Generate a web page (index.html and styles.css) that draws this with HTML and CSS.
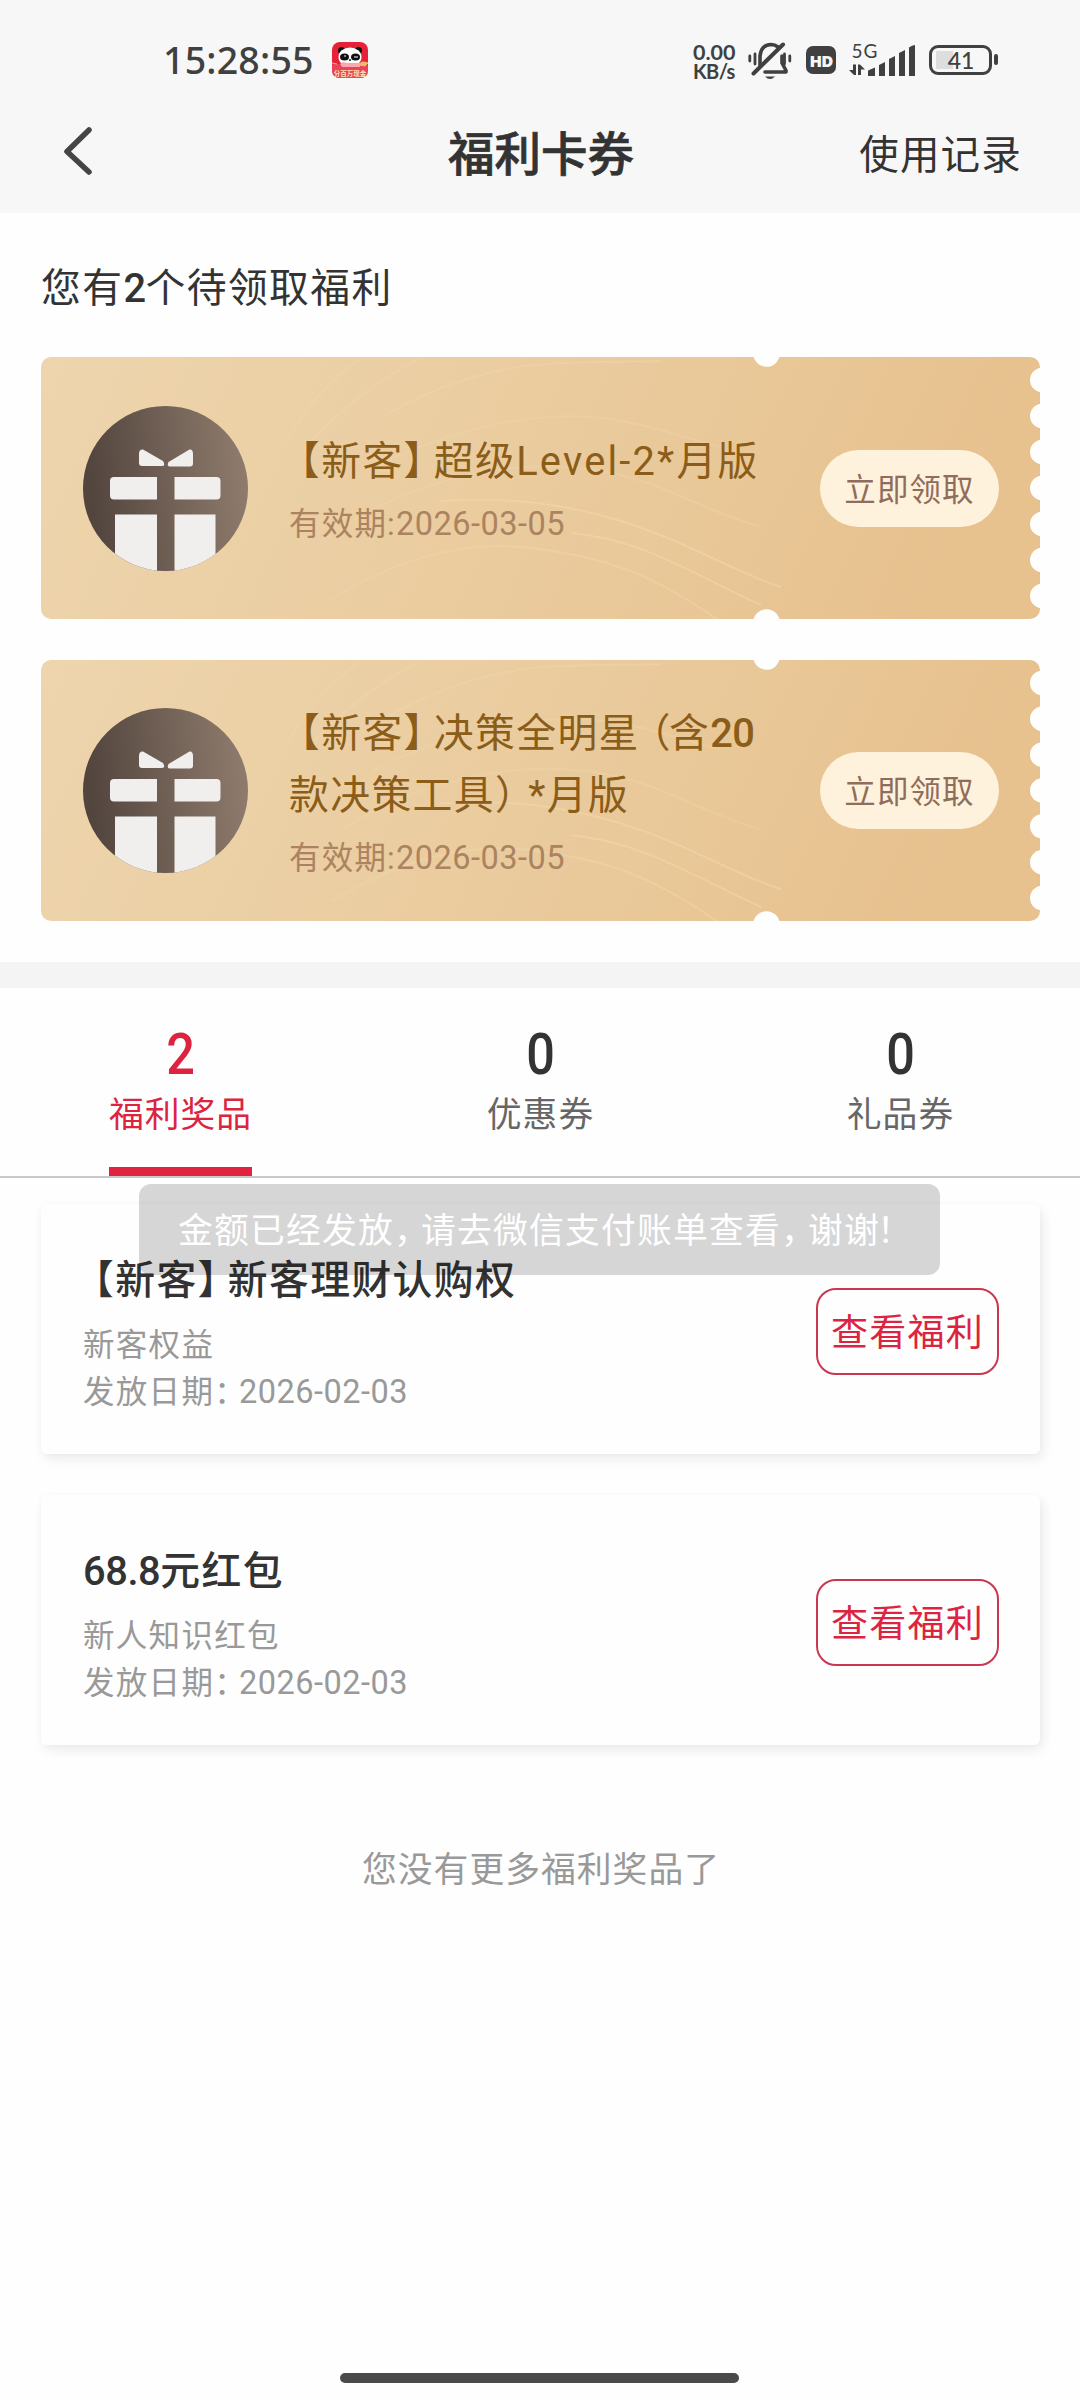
FILE: index.html
```html
<!DOCTYPE html>
<html lang="zh-CN">
<head>
<meta charset="utf-8">
<title>福利卡券</title>
<link rel="stylesheet" href="styles.css">
</head>
<body>
<svg class="defs" width="0" height="0" aria-hidden="true">
  <defs>
    <linearGradient id="coin" x1="0" y1="0.1" x2="1" y2="0"><stop offset="0" stop-color="#52453e"/><stop offset="1" stop-color="#927e6f"/></linearGradient>
    <linearGradient id="gold" x1="0" y1="0" x2="1" y2="0.12"><stop offset="0" stop-color="#eed5ae"/><stop offset="0.5" stop-color="#eacc9f"/><stop offset="1" stop-color="#e7c18e"/></linearGradient>
    <clipPath id="disc"><circle cx="82.5" cy="82.5" r="82.5"/></clipPath>
    <symbol id="gift" viewBox="0 0 165 165">
      <circle cx="82.5" cy="82.5" r="82.5" fill="url(#coin)"/>
      <g fill="#f0efee" clip-path="url(#disc)">
        <path d="M60 43.5 80 55q3 5-1 5H59q-3 0-3-3V48q0-5 4-4.500Z"/>
        <path d="M106.500 43.500 85.500 56q-2 4 1 4.500h20.500q3 0 3-3V48q0-5-3.500-4.500Z"/>
        <path d="M31 71h43v22.500H31q-4 0-4-4V75q0-4 4-4ZM91.500 71h42q4 0 4 4v14.500q0 4-4 4h-42ZM32 108.500h42V165H32ZM91.500 108.500h41V165h-41Z"/>
      </g>
    </symbol>
    <symbol id="ticket" viewBox="0 0 999 262" preserveAspectRatio="none">
      <rect width="999" height="262" rx="10" fill="url(#gold)"/>
      <g fill="none" stroke="#f3d9b0" stroke-width="2">
        <path opacity=".3" d="M248 80C264 52 286 26 318 2M262 94C292 58 332 26 378 2"/>
        <path opacity=".4" d="M344 58C400 26 460 8 520 6S590 5 620 4"/>
        <path opacity=".3" d="M330 112C420 66 500 56 550 60S640 80 680 90"/>
        <path opacity=".3" d="M300 170C400 110 490 104 550 112C620 122 660 154 720 170"/>
        <path opacity=".5" d="M400 144C470 140 520 146 580 164C650 186 690 214 740 230"/>
        <path opacity=".5" d="M530 176C600 182 650 216 720 248"/>
        <path opacity=".4" d="M290 242C360 200 430 180 505 193C580 204 620 224 676 262"/>
      </g>
      <g fill="#fefefe">
        <circle cx="725.500" cy="-3.500" r="13.300"/><circle cx="725.500" cy="265.500" r="13.300"/>
        <circle cx="1001.500" cy="23" r="12.500"/><circle cx="1001.500" cy="59" r="12.500"/><circle cx="1001.500" cy="95" r="12.500"/><circle cx="1001.500" cy="131" r="12.500"/><circle cx="1001.500" cy="167" r="12.500"/><circle cx="1001.500" cy="203" r="12.500"/><circle cx="1001.500" cy="239" r="12.500"/>
      </g>
    </symbol>
  </defs>
</svg>

<header class="header">
  <div class="status">
    <span class="clock">15:28:55</span>
    <svg class="panda" width="36" height="36" viewBox="0 0 36 36">
      <rect width="36" height="36" rx="8" fill="#e52238"/>
      <path d="M0 23q6-3 10 1h16q4-4 10-1v5q0 8-8 8H8q-8 0-8-8Z" fill="#e8455a"/>
      <path d="M0 21l5 1M27 23q2-4 5-3l4 1-3 3Z" stroke="#f6b56a" fill="#f6b56a"/>
      <circle cx="9.500" cy="8.500" r="3.500" fill="#111"/><circle cx="26.500" cy="8.500" r="3.500" fill="#111"/>
      <ellipse cx="18" cy="15" rx="11.500" ry="9.500" fill="#fff"/>
      <path d="M8 22l3-2 4 1h13v4H10Z" fill="#f8a9b0"/>
      <ellipse cx="12.500" cy="15" rx="4.500" ry="3.500" fill="#111"/><ellipse cx="23.500" cy="15" rx="4.500" ry="3.500" fill="#111"/>
      <path d="M12 14h2M22 15h4" stroke="#fff" stroke-width="1.200"/><circle cx="18" cy="18" r="1" fill="#111"/>
      <text x="18" y="33.500" text-anchor="middle" class="panda-text">分百万现金</text>
    </svg>
    <div class="rate"><span>0.00</span><span class="unit">KB/s</span></div>
    <svg class="bell" width="44" height="38" viewBox="0 0 44 38" fill="none" stroke="#404040" stroke-width="3.600" stroke-linecap="round">
      <path d="M1.800 14v5M7 12v10M36.500 12v10M41.800 14v5" stroke-width="2.800"/>
      <path d="M12 24V14Q13 3 23 2.500Q27 2.500 30 5M34 14V21L38 28.500V30H17" stroke-linejoin="round"/>
      <path d="M5.500 31.500 35 2.500" stroke-width="4"/>
      <path d="M17 34.500h10q-5 5-10 0Z" fill="#404040" stroke="none"/>
    </svg>
    <span class="hd">HD</span>
    <svg class="signal" width="68" height="36" viewBox="0 0 68 36" fill="#404040">
      <text x="2.500" y="16" class="net" textLength="26">5G</text>
      <path d="M4 22.500h3V33H5L0 28h4ZM9 33V22.500h2l5 5h-4V33Z"/>
      <path d="M19 28.500 26 25.500V34H19ZM30 23l6-3v14h-6ZM40 17l6-3v20h-6ZM50 11l6-3v26h-6ZM60 5.500q3-2.500 6-2.500v31h-6Z"/>
    </svg>
    <div class="battery"><span>41</span></div>
  </div>
  <div class="nav">
    <svg class="back" width="32" height="56" viewBox="0 0 32 56" fill="none" stroke="#454545" stroke-width="5.500" stroke-linecap="round" stroke-linejoin="round"><path d="M27 7 5 28.500 27 49"/></svg>
    <h1>福利卡券</h1>
    <a class="history">使用记录</a>
  </div>
</header>

<section class="pending">
  <h2>您有<span class="digit">2</span>个待领取福利</h2>
  <article class="ticket">
    <svg class="ticket-bg"><use href="#ticket"/></svg>
    <svg class="gift"><use href="#gift"/></svg>
    <div class="ticket-info">
      <p class="ticket-title"><span class="open">【</span>新客<span class="close">】</span>超级<span class="latin">Level-2*</span>月版</p>
      <p class="ticket-date">有效期:<span class="date">2026-03-05</span></p>
    </div>
    <button class="claim">立即领取</button>
  </article>
  <article class="ticket">
    <svg class="ticket-bg"><use href="#ticket"/></svg>
    <svg class="gift"><use href="#gift"/></svg>
    <div class="ticket-info">
      <p class="ticket-title"><span class="open">【</span>新客<span class="close">】</span>决策全明星<span class="paren-open">（</span>含<span class="digit">20</span><br>款决策工具<span class="paren-close">）</span>*月版</p>
      <p class="ticket-date">有效期:<span class="date">2026-03-05</span></p>
    </div>
    <button class="claim">立即领取</button>
  </article>
</section>

<nav class="tabs">
  <div class="tab active"><b>2</b><span>福利奖品</span></div>
  <div class="tab"><b>0</b><span>优惠券</span></div>
  <div class="tab"><b>0</b><span>礼品券</span></div>
</nav>

<main class="prizes">
  <article class="prize">
    <div>
      <h3><span class="open">【</span>新客<span class="close">】</span>新客理财认购权</h3>
      <p>新客权益</p>
      <p>发放日期<span class="colon">：</span><span class="date">2026-02-03</span></p>
    </div>
    <button class="view">查看福利</button>
  </article>
  <article class="prize">
    <div>
      <h3><span class="amount">68.8</span>元红包</h3>
      <p>新人知识红包</p>
      <p>发放日期<span class="colon">：</span><span class="date">2026-02-03</span></p>
    </div>
    <button class="view">查看福利</button>
  </article>
  <p class="end">您没有更多福利奖品了</p>
  <div class="toast">金额已经发放<span class="comma">，</span>请去微信支付账单查看<span class="comma">，</span>谢谢<span class="bang">！</span></div>
</main>
<div class="home-bar"></div>
</body>
</html>
```
FILE: styles.css
```css
* { box-sizing: border-box; margin: 0; padding: 0; }
body {
  width: 1080px; height: 2400px; display: flex; flex-direction: column;
  background: #fefefe; color: #333; overflow: hidden;
  font-family: Roboto, "Noto Sans CJK SC", sans-serif;
}
.defs { position: absolute; }
h1, h2, h3 { font-weight: 400; }
button { border: 0; font: inherit; white-space: nowrap; }
p, h2, h3 { white-space: nowrap; }

.header { height: 213px; background: #f7f7f7; }
.status { height: 118px; padding: 42px 82px 0 163px; display: flex; align-items: flex-start; color: #404040; }
.clock { width: 169px; font: 500 37.500px/36px "Noto Sans", sans-serif; letter-spacing: .2px; }
.panda-text { font: 700 6.500px "Noto Sans CJK SC", sans-serif; fill: #ffe3b0; }
.rate { width: 55px; margin-left: 325px; display: flex; flex-direction: column; font: 700 21.500px/19px Lato, sans-serif; padding-top: 1px; }
.unit { font-size: 20px; letter-spacing: -.6px; }
.bell { flex: none; }
.hd { margin: 4px 0 0 14px; width: 30px; height: 28px; border-radius: 7px; background: #404040; color: #f7f7f7; font: 800 16.500px/29px "Open Sans", sans-serif; text-align: center; letter-spacing: -.8px; flex: none; }
.signal { margin-left: 13px; flex: none; overflow: visible; }
.net { font: 400 19px Lato, sans-serif; }
.battery { position: relative; margin: 3px 0 0 12px; width: 63px; height: 30px; border: 3px solid #404040; border-radius: 9px; flex: none; font: 500 23px/25px Lato, sans-serif; text-align: center; padding-left: 1px; background: linear-gradient(#ddd, #ddd) 4px 3px / 17px 18px no-repeat; }
.battery::after { content: ""; position: absolute; right: -9px; top: 6px; width: 4px; height: 11px; border-radius: 2px; background: #404040; }

.nav { height: 95px; padding: 0 58px 0 62px; display: grid; grid-template-columns: 1fr auto 1fr; align-items: start; }
.back { margin-top: 5px; }
.nav h1 { font-size: 46.500px; font-weight: 500; line-height: 74px; margin-left: -2px; -webkit-text-stroke: .7px #333; }
.history { justify-self: end; font-size: 39.500px; letter-spacing: 1.200px; line-height: 75px; }

.pending { height: 775px; padding: 45px 40px 0 41px; border-bottom: 26px solid #f4f4f4; display: flex; flex-direction: column; }
.pending h2 { font-size: 39.800px; letter-spacing: 1.400px; line-height: 62px; height: 99px; }
.digit { font-weight: 500; letter-spacing: -.5px; }
.ticket { position: relative; height: 262px; padding: 0 41px 0 42px; margin-bottom: 41px; display: flex; align-items: center; flex: none; }
.ticket:last-child { margin-bottom: 0; height: 261px; }
.ticket-bg { position: absolute; inset: 0; width: 100%; height: 100%; }
.gift { position: relative; width: 165px; height: 165px; flex: none; }
.ticket-info { position: relative; width: 490px; margin-left: 41px; padding-top: 11px; }
.ticket-title { font-size: 39.800px; letter-spacing: 1.400px; line-height: 62px; color: #8b5d18; }
.latin { letter-spacing: 2.200px; }
.ticket-date { font-size: 31.500px; letter-spacing: 1.200px; line-height: 62px; color: #ab8360; }
.open { margin-left: -9px; }
.close { margin-right: -11px; }
.paren-open { margin: 0 -3px 0 -9px; }
.paren-close { margin-right: -8px; }
.date { font-size: 32.500px; letter-spacing: .5px; }
.claim { position: relative; margin-left: auto; width: 179px; height: 77px; padding-top: 5px; border-radius: 39px; background: #fff2dc; color: #906d5b; font-size: 31.500px; letter-spacing: 1.100px; line-height: 72px; }

.tabs { height: 190px; border-bottom: 2px solid #c8c8c8; display: grid; grid-template-columns: repeat(3, 1fr); flex: none; }
.tab { display: flex; flex-direction: column; align-items: center; color: #666; position: relative; padding-top: 32px; }
.tab b { font-size: 58px; font-weight: 500; line-height: 68px; color: #333; transform: scaleX(.87); }
.tab span { font-size: 34.800px; letter-spacing: 1px; line-height: 54px; padding-left: 1px; }
.tab.active, .tab.active b { color: #dc2440; }
.tab.active::after { content: ""; width: 143px; height: 9px; background: #e0243f; margin-top: auto; }

.prizes { position: relative; padding: 26px 40px 0 41px; }
.prize { height: 250px; margin-bottom: 41px; padding: 0 41px 0 42px; border-radius: 6px; box-shadow: 3px 5px 12px rgba(0,0,0,.08), 0 0 6px rgba(0,0,0,.02); display: flex; align-items: flex-start; justify-content: space-between; }
.prize > div { padding-top: 46px; }
.prize h3 { font-size: 39.800px; letter-spacing: 1.400px; font-weight: 500; line-height: 62px; margin-bottom: 11px; }
.prize .amount { letter-spacing: -.4px; }
.prize p { font-size: 31.500px; letter-spacing: 1.300px; line-height: 46px; color: #999; }
.prize .date { font-size: 32.500px; letter-spacing: .5px; }
.colon { margin-right: -8px; }
.view { margin-top: 84px; width: 183px; height: 87px; padding-top: 4px; border: 2px solid #c93850; border-radius: 20px; background: none; color: #dc2440; font-size: 37px; letter-spacing: 1.200px; line-height: 79px; }
.end { margin-top: 98px; padding-left: 1px; text-align: center; font-size: 34.800px; letter-spacing: 1px; line-height: 54px; color: #999; }
.toast { position: absolute; left: 139px; top: 6px; width: 801px; height: 91px; padding: 2px 0 0 39px; border-radius: 12px; background: rgba(0,0,0,.155); color: #fff; font-size: 34.800px; letter-spacing: 1.200px; line-height: 91px; white-space: nowrap; }
.comma { margin-right: -9px; }
.bang { margin-left: -3px; }
.home-bar { width: 399px; height: 10px; border-radius: 5px; background: #4a4a4a; margin: auto auto 17px 340px; }
```
